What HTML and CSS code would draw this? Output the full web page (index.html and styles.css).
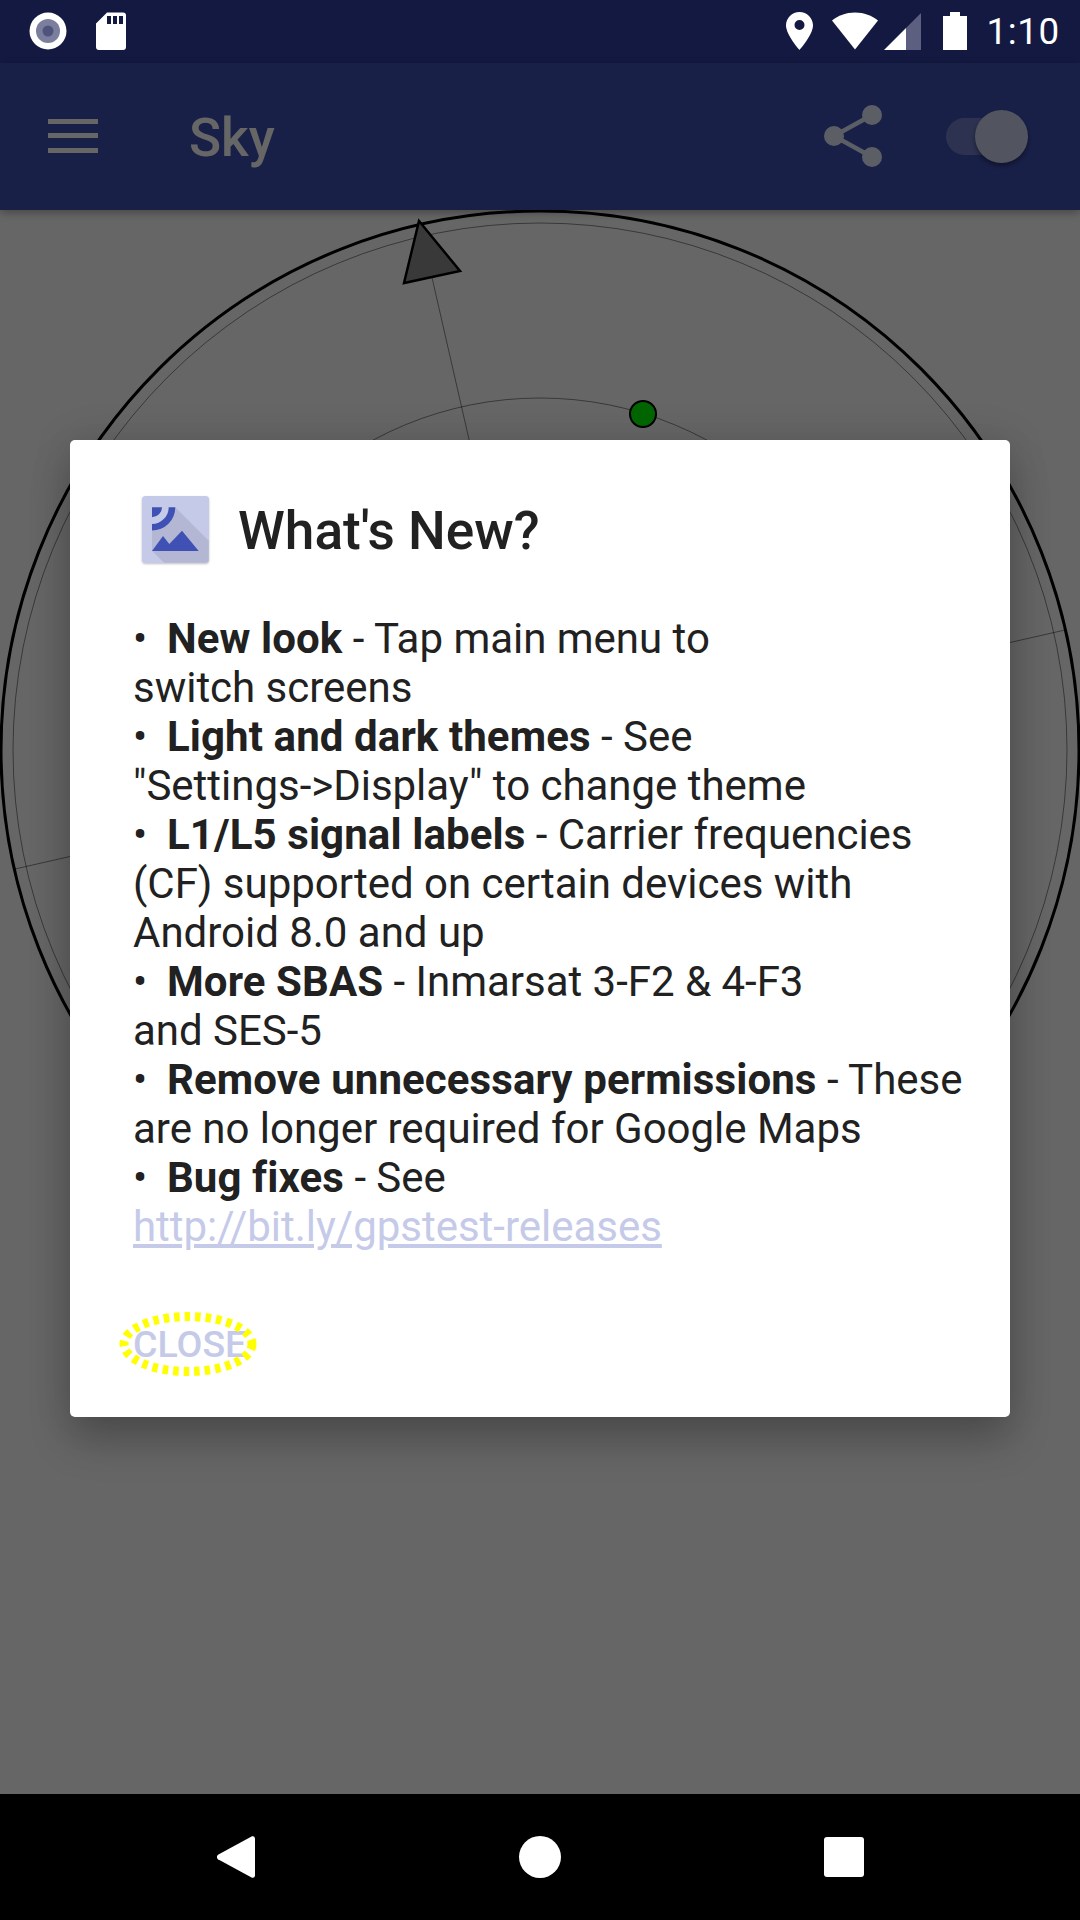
FILE: index.html
```html
<!DOCTYPE html>
<html lang="en">
<head>
<meta charset="utf-8">
<title>Sky</title>
<link rel="stylesheet" href="styles.css">
</head>
<body>
<div class="screen">
  <header class="status">
    <div class="status-left">
      <svg class="ic-record" viewBox="0 0 38 38"><circle cx="19" cy="19" r="18.5" fill="#fff"/><circle cx="19" cy="19" r="12" fill="#7b7e9c"/><circle cx="19" cy="19" r="5.5" fill="#50547c"/></svg>
      <svg class="ic-sd" viewBox="0 0 30 38"><path fill="#fff" d="M11 .5H27a3 3 0 0 1 3 3V35a3 3 0 0 1-3 3H3a3 3 0 0 1-3-3V11.500z"/><path fill="#131940" d="M11 4h4v8h-4zM17 4h4v8h-4zM23 4h4v8h-4z"/></svg>
    </div>
    <div class="status-right">
      <svg class="ic-pin" viewBox="0 0 27 38"><path fill="#fff" fill-rule="evenodd" d="M13.500 0C6 0 0 6 0 13.300 0 23 13.500 38 13.500 38S27 23 27 13.300C27 6 21 0 13.500 0zm0 18a5 5 0 1 1 0-10 5 5 0 0 1 0 10z"/></svg>
      <svg class="ic-wifi" viewBox="0 0 46 38"><path fill="#fff" d="M23 37.500 0 8.500C6 3.500 14 .5 23 .5s17 3 23 8z"/></svg>
      <svg class="ic-signal" viewBox="0 0 37 37"><path fill="#5c5f80" d="M37 0V37H22V15z"/><path fill="#fff" d="M22 15V37H0z"/></svg>
      <svg class="ic-battery" viewBox="0 0 24 38"><path fill="#fff" d="M7 0H17V4H24V38H0V4H7z"/></svg>
      <span class="time">1:10</span>
    </div>
  </header>
  <main class="main">
    <div class="appbar">
      <button class="menu" aria-label="Menu"><span></span><span></span><span></span></button>
      <h1 class="title">Sky</h1>
      <svg class="ic-share" viewBox="0 0 58 62"><path stroke="#e6ebff" stroke-width="4.500" fill="none" d="M48 10 10 31 48 52"/><circle cx="48" cy="10" r="10" fill="#e6ebff"/><circle cx="10" cy="31" r="10" fill="#e6ebff"/><circle cx="48" cy="52" r="10" fill="#e6ebff"/></svg>
      <div class="switch"><span class="thumb"></span></div>
    </div>
    <div class="sky">
      <svg class="sky-plot" viewBox="0 0 1080 1584">
        <circle class="horizon" cx="540" cy="540" r="539"/>
        <circle class="grid" cx="540" cy="540" r="527"/>
        <circle class="grid" cx="540" cy="540" r="352"/>
        <circle class="grid" cx="540" cy="540" r="176"/>
        <line class="grid" x1="420" y1="15" x2="660" y2="1065"/>
        <line class="grid" x1="15" y1="659" x2="1065" y2="420"/>
        <polygon class="needle" points="419,11 460,61 404,73"/>
        <circle class="sat" cx="643" cy="204" r="13"/>
      </svg>
    </div>
    <div class="scrim">
      <section class="dialog">
        <div class="dialog-head">
          <svg class="app-icon" viewBox="0 0 67 67">
            <rect width="67" height="67" rx="3.500" fill="#c5cae9"/>
            <path fill="#000" opacity=".09" d="M33.300 11.300 66.700 44.700V63.500a3.200 3.200 0 0 1-3.200 3.200H22L10 55V34.600z"/>
            <path fill="#3f51b5" d="M10 11.300h10a10 10 0 0 1-10 10zM26.700 11.300h6.600a23.300 23.300 0 0 1-23.300 23.300v-6.600a16.700 16.700 0 0 0 16.700-16.700zM10 55 21 40 27.300 48 40 34.700 56.700 55z"/>
          </svg>
          <h2 class="dialog-title">What's New?</h2>
        </div>
        <p class="dialog-body">•&nbsp; <b>New look</b> - Tap main menu to<br>switch screens<br>•&nbsp; <b>Light and dark themes</b> - See<br>"Settings-&gt;Display" to change theme<br>•&nbsp; <b>L1/L5 signal labels</b> - Carrier frequencies<br>(CF) supported on certain devices with<br>Android 8.0 and up<br>•&nbsp; <b>More SBAS</b> - Inmarsat 3-F2 &amp; 4-F3<br>and SES-5<br>•&nbsp; <b>Remove unnecessary permissions</b> - These<br>are no longer required for Google Maps<br>•&nbsp; <b>Bug fixes</b> - See<br><a href="#">http://bit.ly/gpstest-releases</a></p>
        <div class="dialog-actions">
          <button class="close">CLOSE<svg class="focus-ring" viewBox="0 0 142 66"><ellipse cx="71" cy="33" rx="64" ry="27.500"/></svg></button>
        </div>
      </section>
    </div>
  </main>
  <nav class="navbar">
    <svg class="ic-back" viewBox="0 0 38 42"><path fill="#fff" d="M35 .3a2.500 2.500 0 0 1 3 2.200V39.500a2.500 2.500 0 0 1-3 2.200L1 23.200a2.800 2.800 0 0 1 0-4.400z"/></svg>
    <span class="ic-home"></span>
    <span class="ic-recent"></span>
  </nav>
</div>
</body>
</html>
```

FILE: styles.css
```css
* { box-sizing: border-box; }
html, body { margin: 0; padding: 0; }
body { font-family: Roboto, "Liberation Sans", sans-serif; background: #000; }
.screen { width: 1080px; height: 1920px; display: flex; flex-direction: column; overflow: hidden; }

.status { height: 63px; flex: none; background: #131940; display: flex; justify-content: space-between; align-items: flex-start; padding: 12px 23.5px 0 28.5px; }
.status-left, .status-right { display: flex; align-items: flex-start; }
.ic-record { width: 38px; height: 38px; }
.ic-sd { width: 30px; height: 38px; margin-left: 29px; }
.ic-pin { width: 27px; height: 38px; }
.ic-wifi { width: 46px; height: 38px; margin-left: 18.5px; }
.ic-signal { width: 37px; height: 37px; margin-left: 6.5px; margin-top: 1px; }
.ic-battery { width: 24px; height: 38px; margin-left: 22px; }
.time { color: #fff; font-size: 36.75px; line-height: 40px; margin-left: 19.5px; width: 70px; letter-spacing: .6px; }

.main { flex: 1; position: relative; display: flex; flex-direction: column; background: #fff; min-height: 0; }
.appbar { height: 147px; flex: none; background: #3f51b5; display: flex; align-items: center; position: relative; z-index: 1; box-shadow: 0 3px 8px rgba(0,0,0,.3); padding-left: 48px; }
.menu { width: 50px; height: 34px; padding: 0; border: 0; background: none; display: flex; flex-direction: column; justify-content: space-between; margin-top: -2px; }
.menu span { display: block; height: 5px; background: #fff; }
.title { margin: 3px 0 0 91px; font-size: 53px; font-weight: 500; color: #fff; line-height: 60px; flex: 1; }
.ic-share { width: 58px; height: 62px; margin-right: 64px; margin-top: -1px; }
.switch { width: 77px; height: 37px; border-radius: 19px; background: #6f7ec9; position: relative; margin-right: 57px; margin-top: -1px; }
.thumb { position: absolute; right: -5px; top: -8px; width: 53px; height: 53px; border-radius: 50%; background: #ced1f0; box-shadow: 0 3px 5px rgba(0,0,0,.4); }

.sky { flex: 1; min-height: 0; }
.sky-plot { display: block; width: 1080px; height: 1584px; }
.horizon { fill: none; stroke: #000; stroke-width: 3; }
.grid { fill: none; stroke: #000; stroke-width: 1; opacity: .45; }
.needle { fill: #909090; stroke: #000; stroke-width: 2.5; stroke-linejoin: miter; }
.sat { fill: #0f0; stroke: #000; stroke-width: 2; }

.scrim { position: absolute; inset: 0; z-index: 2; background: rgba(0,0,0,.6); display: flex; align-items: center; justify-content: center; }
.dialog { width: 940px; height: 977px; background: #fff; border-radius: 5px; box-shadow: 0 24px 40px rgba(0,0,0,.22), 0 0 40px rgba(0,0,0,.12); padding: 56px 24px 0 63px; display: flex; flex-direction: column; }
.dialog-head { display: flex; align-items: flex-start; padding-left: 9px; }
.app-icon { width: 67px; height: 67px; filter: drop-shadow(0 1px 1px rgba(0,0,0,.25)); }
.dialog-title { margin: 2px 0 0 29px; font-size: 53.2px; font-weight: 500; color: #212121; line-height: 67px; }
.dialog-body { margin: 49px 0 0; font-size: 42px; line-height: 49px; color: #212121; white-space: nowrap; letter-spacing: -.02px; }
.dialog-body b { font-weight: 700; letter-spacing: .1px; margin-left: -1px; }
.dialog-body a { color: #c5cae9; }
.dialog-actions { margin-top: 71px; }
.close { position: relative; border: 0; background: none; padding: 0; font: 500 37.5px/44px Roboto, sans-serif; color: #c5cae9; display: block; }
.focus-ring { position: absolute; left: -16px; top: -11px; width: 142px; height: 66px; overflow: visible; }
.focus-ring ellipse { fill: none; stroke: #ff0; stroke-width: 9; stroke-dasharray: 5.5 5; }

.navbar { height: 126px; flex: none; background: #000; position: relative; display: flex; align-items: center; }
.ic-back { width: 38px; height: 42px; margin-left: 217px; }
.ic-home { width: 42px; height: 42px; border-radius: 50%; background: #fff; margin-left: 264px; }
.ic-recent { width: 40px; height: 40px; border-radius: 3px; background: #fff; margin-left: 263px; }
```
